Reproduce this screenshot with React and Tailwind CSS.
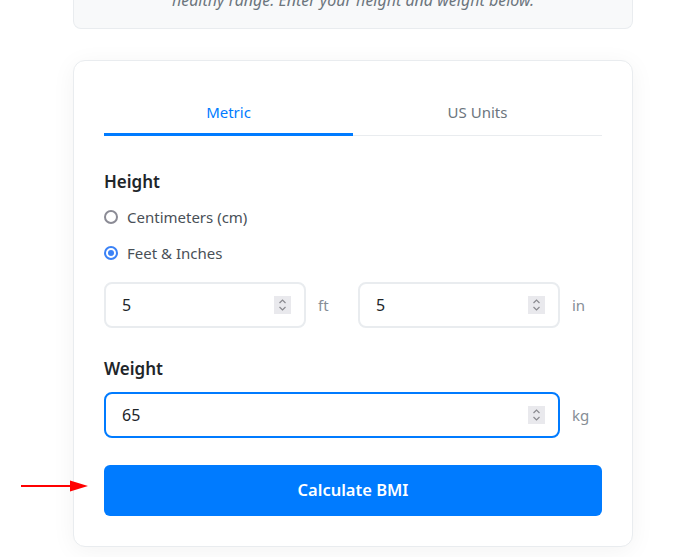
import React, { useState } from "react";

const font = { fontFamily: '"Noto Sans", "Open Sans", sans-serif' };

function Spinner() {
  return (
    <span className="flex h-[18px] w-[17px] flex-col items-center justify-center bg-[#e9e9ed]">
      <svg width="9" height="14" viewBox="0 0 9 14" fill="none" stroke="#8a8a8f" strokeWidth="1.2">
        <path d="M1.5 5 L4.5 2 L7.5 5" />
        <path d="M1.5 9 L4.5 12 L7.5 9" />
      </svg>
    </span>
  );
}

function NumberBox({ value, unit, focused }) {
  return (
    <div className="flex flex-1 items-center">
      <div
        className={`flex h-[46px] flex-1 items-center justify-between rounded-lg border-2 bg-white pl-[16px] pr-[13px] ${
          focused ? "border-[#007bff]" : "border-[#e9ecef]"
        }`}
      >
        <span className="text-[16px] text-[#212529]">{value}</span>
        <Spinner />
      </div>
      <span className="w-[42px] pl-[12px] text-[15px] text-[#868e96]">{unit}</span>
    </div>
  );
}

function Radio({ checked, label }) {
  return (
    <label className="flex items-center gap-[9px] text-[15px] text-[#495057]">
      {checked ? (
        <span className="flex h-[14px] w-[14px] items-center justify-center rounded-full border-2 border-[#3b82f6]">
          <span className="h-[6px] w-[6px] rounded-full bg-[#3b82f6]" />
        </span>
      ) : (
        <span className="h-[14px] w-[14px] rounded-full border-2 border-[#8b8b95]" />
      )}
      {label}
    </label>
  );
}

export default function App() {
  const [tab, setTab] = useState("metric");

  return (
    <div className="relative flex min-h-[557px] flex-col bg-white" style={font}>
      <div className="ml-[73px] w-[560px]">
        {/* intro panel, scrolled past its top */}
        <div className="flex h-[29px] justify-center overflow-hidden rounded-b-lg border border-t-0 border-[#e9ecef] bg-[#f8f9fa]">
          <p className="-mt-[12px] text-[16px] italic leading-[24px] text-[#6c757d]">
            healthy range. Enter your height and weight below.
          </p>
        </div>

        {/* calculator card */}
        <div className="mt-[31px] rounded-xl border border-[#e9ecef] bg-white px-[30px] pb-[30px] pt-[30px] shadow-[0_4px_24px_rgba(0,0,0,0.05)]">
          <div className="flex border-b border-[#e9ecef]">
            <button
              onClick={() => setTab("metric")}
              className={`-mb-px flex h-[45px] flex-1 items-center justify-center border-b-[3px] text-[15px] ${
                tab === "metric" ? "border-[#007bff] text-[#007bff]" : "border-transparent text-[#6c757d]"
              }`}
            >
              Metric
            </button>
            <button
              onClick={() => setTab("us")}
              className={`-mb-px flex h-[45px] flex-1 items-center justify-center border-b-[3px] text-[15px] ${
                tab === "us" ? "border-[#007bff] text-[#007bff]" : "border-transparent text-[#6c757d]"
              }`}
            >
              US Units
            </button>
          </div>

          <h3 className="mt-[34px] text-[17px] font-semibold leading-[24px] text-[#212529]">Height</h3>
          <div className="mt-[12px] flex flex-col gap-[13px]">
            <Radio label="Centimeters (cm)" />
            <Radio checked label="Feet & Inches" />
          </div>

          <div className="mt-[18px] flex gap-[10px]">
            <NumberBox value="5" unit="ft" />
            <NumberBox value="5" unit="in" />
          </div>

          <h3 className="mt-[29px] text-[17px] font-semibold leading-[24px] text-[#212529]">Weight</h3>
          <div className="mt-[11px] flex">
            <NumberBox value="65" unit="kg" focused />
          </div>

          <button className="mt-[27px] h-[51px] w-full rounded-md bg-[#007bff] text-[16.5px] font-semibold text-white">
            Calculate BMI
          </button>
        </div>
      </div>

      {/* annotation arrow */}
      <svg className="absolute left-[20px] top-[479px]" width="70" height="14" viewBox="0 0 70 14">
        <line x1="1" y1="7" x2="54" y2="7" stroke="#ff0000" strokeWidth="2" />
        <polygon points="50,1.5 68,7 50,12.5" fill="#ff0000" />
      </svg>
    </div>
  );
}
